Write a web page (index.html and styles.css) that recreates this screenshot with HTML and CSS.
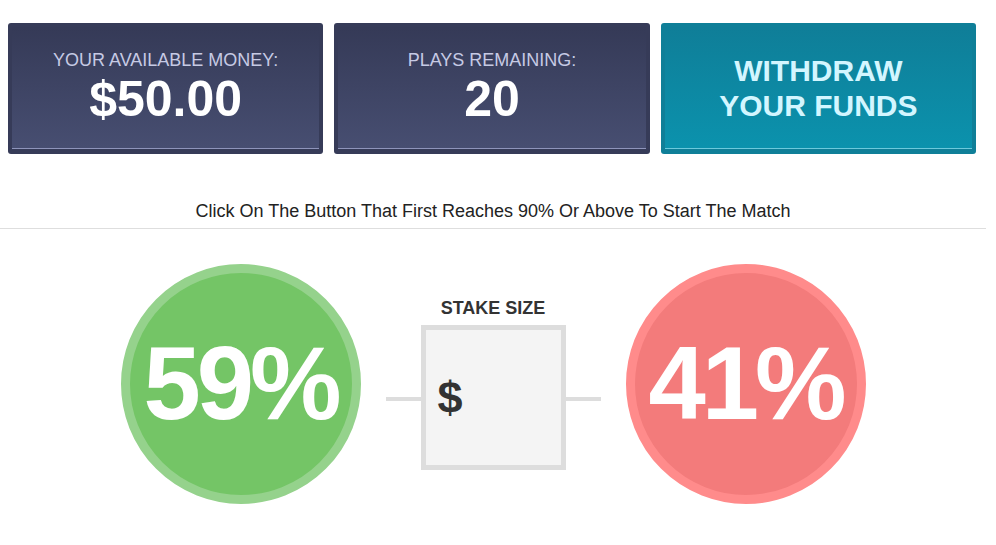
FILE: index.html
```html
<!DOCTYPE html>
<html lang="en">

<head>
    <meta charset="UTF-8">
    <meta name="viewport" content="width=device-width, initial-scale=1.0">
    <title>Match</title>
    <link rel="stylesheet" href="styles.css">
</head>

<body>
    <div class="page">
        <div class="stats">
            <div class="card">
                <div class="card-inner">
                    <div class="card-label">YOUR AVAILABLE MONEY:</div>
                    <div class="card-value">$50.00</div>
                </div>
            </div>
            <div class="card">
                <div class="card-inner">
                    <div class="card-label">PLAYS REMAINING:</div>
                    <div class="card-value">20</div>
                </div>
            </div>
            <div class="card card-withdraw">
                <div class="card-inner">
                    <div class="withdraw-text">WITHDRAW<br>YOUR FUNDS</div>
                </div>
            </div>
        </div>

        <p class="hint">Click On The Button That First Reaches 90% Or Above To Start The Match</p>

        <div class="arena">
            <button class="odds odds-green">59%</button>
            <div class="stake">
                <div class="stake-label">STAKE SIZE</div>
                <div class="stake-row">
                    <span class="link-line"></span>
                    <label class="stake-box">
                        <span class="dollar">$</span>
                        <input type="text" class="stake-input">
                    </label>
                    <span class="link-line"></span>
                </div>
            </div>
            <button class="odds odds-red">41%</button>
        </div>
    </div>
</body>

</html>
```

FILE: styles.css
```css
body {
    font-family: 'Liberation Sans', Arial, sans-serif;
    background-color: #fff;
    margin: 0;
    color: #222;
}

.page {
    width: 986px;
    padding-top: 23px;
}

.stats {
    display: grid;
    grid-template-columns: repeat(3, 1fr);
    gap: 11px;
    margin-left: 8px;
    width: 968px;
}

.card {
    background-color: #363b58;
    border-radius: 3px;
    padding: 4px 4px 5px;
}

.card-inner {
    height: 122px;
    background: linear-gradient(#353a57, #474e71);
    border-bottom: 1px solid #8e94ba;
    text-align: center;
    box-sizing: border-box;
    padding-top: 23px;
}

.card-label {
    color: #c6cae4;
    font-size: 18px;
    line-height: 21px;
}

.card-value {
    color: #fff;
    font-size: 50px;
    font-weight: bold;
    line-height: 57px;
}

.card-withdraw {
    background-color: #0f7f98;
}

.card-withdraw .card-inner {
    background: linear-gradient(#0f7e98, #0b92ad);
    border-bottom-color: #6cc9dc;
    padding-top: 26px;
}

.withdraw-text {
    color: #d3f6ff;
    font-size: 30px;
    font-weight: bold;
    line-height: 35px;
}

.hint {
    margin: 47px 0 0;
    padding-bottom: 7px;
    border-bottom: 1px solid #dedede;
    text-align: center;
    font-size: 18px;
    line-height: 20px;
    color: #222;
}

.arena {
    display: flex;
    align-items: center;
    justify-content: center;
    gap: 25px;
    margin-top: 35px;
}

.odds {
    width: 240px;
    height: 240px;
    border-radius: 50%;
    border: 9px solid;
    box-sizing: border-box;
    color: #fff;
    font-family: 'Liberation Sans', Arial, sans-serif;
    font-size: 103px;
    font-weight: bold;
    letter-spacing: -4px;
    padding: 0;
    cursor: pointer;
}

.odds-green {
    background-color: #74c566;
    border-color: #95d28c;
}

.odds-red {
    background-color: #f37b7b;
    border-color: #ff8b8b;
}

.stake {
    display: flex;
    flex-direction: column;
    align-items: center;
}

.stake-label {
    font-size: 18px;
    font-weight: bold;
    color: #333;
    line-height: 21px;
    margin-bottom: 6px;
}

.stake-row {
    display: flex;
    align-items: center;
}

.link-line {
    width: 35px;
    height: 4px;
    margin-top: 2px;
    background-color: #dddddd;
}

.stake-box {
    display: flex;
    align-items: center;
    width: 145px;
    height: 145px;
    box-sizing: border-box;
    border: 5px solid #dddddd;
    background-color: #f4f4f4;
    padding-left: 12px;
}

.dollar {
    font-size: 45px;
    font-weight: bold;
    color: #333;
}

.stake-input {
    width: 80px;
    border: none;
    background: transparent;
    font-size: 30px;
    outline: none;
}
```
